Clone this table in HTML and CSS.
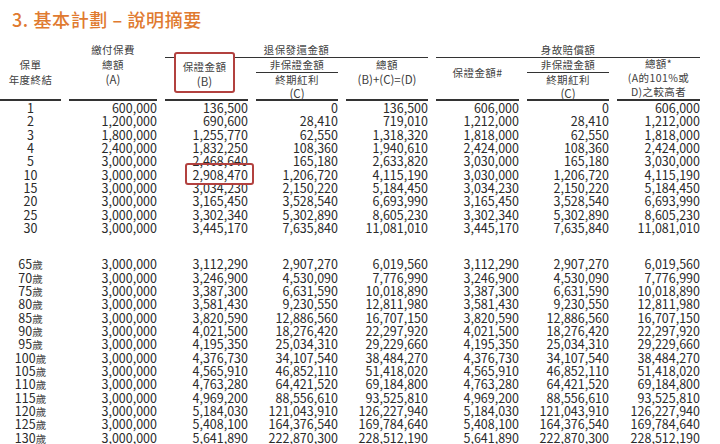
FILE: index.html
```html
<!DOCTYPE html>
<html lang="zh-Hant">
<head>
<meta charset="utf-8">
<title>基本計劃 – 說明摘要</title>
<link rel="stylesheet" href="styles.css">
</head>
<body>
<div class="page">
  <h1 class="title">3. 基本計劃 – 說明摘要</h1>

  <div class="head cols">
    <div class="grp grp-a">退保發還金額</div>
    <div class="grp grp-b">身故賠償額</div>

    <div class="hc c1 bottom"><span>保單</span><span>年度終結</span></div>
    <div class="hc c2 bottom"><span>繳付保費</span><span>總額</span><span class="lat">(A)</span></div>
    <div class="hc c3">
      <div class="mark"><span>保證金額</span><span class="lat">(B)</span></div>
    </div>
    <div class="hc c4 split">
      <span class="sub">非保證金額</span><span>終期紅利</span><span class="lat last">(C)</span>
    </div>
    <div class="hc c5 bottom"><span>總額</span><span class="lat">(B)+(C)=(D)</span></div>
    <div class="hc c6 mid"><span>保證金額#</span></div>
    <div class="hc c7 split">
      <span class="sub">非保證金額</span><span>終期紅利</span><span class="lat last">(C)</span>
    </div>
    <div class="hc c8 three"><span>總額*</span><span>(A的101%或</span><span>D)之較高者</span></div>
  </div>

  <div class="block block1">
    <div class="row cols"><span>1</span><span>600,000</span><span>136,500</span><span>0</span><span>136,500</span><span>606,000</span><span>0</span><span>606,000</span></div>
    <div class="row cols"><span>2</span><span>1,200,000</span><span>690,600</span><span>28,410</span><span>719,010</span><span>1,212,000</span><span>28,410</span><span>1,212,000</span></div>
    <div class="row cols"><span>3</span><span>1,800,000</span><span>1,255,770</span><span>62,550</span><span>1,318,320</span><span>1,818,000</span><span>62,550</span><span>1,818,000</span></div>
    <div class="row cols"><span>4</span><span>2,400,000</span><span>1,832,250</span><span>108,360</span><span>1,940,610</span><span>2,424,000</span><span>108,360</span><span>2,424,000</span></div>
    <div class="row cols"><span>5</span><span>3,000,000</span><span>2,468,640</span><span>165,180</span><span>2,633,820</span><span>3,030,000</span><span>165,180</span><span>3,030,000</span></div>
    <div class="row cols"><span>10</span><span>3,000,000</span><span><em class="hl">2,908,470</em></span><span>1,206,720</span><span>4,115,190</span><span>3,030,000</span><span>1,206,720</span><span>4,115,190</span></div>
    <div class="row cols"><span>15</span><span>3,000,000</span><span>3,034,230</span><span>2,150,220</span><span>5,184,450</span><span>3,034,230</span><span>2,150,220</span><span>5,184,450</span></div>
    <div class="row cols"><span>20</span><span>3,000,000</span><span>3,165,450</span><span>3,528,540</span><span>6,693,990</span><span>3,165,450</span><span>3,528,540</span><span>6,693,990</span></div>
    <div class="row cols"><span>25</span><span>3,000,000</span><span>3,302,340</span><span>5,302,890</span><span>8,605,230</span><span>3,302,340</span><span>5,302,890</span><span>8,605,230</span></div>
    <div class="row cols"><span>30</span><span>3,000,000</span><span>3,445,170</span><span>7,635,840</span><span>11,081,010</span><span>3,445,170</span><span>7,635,840</span><span>11,081,010</span></div>
  </div>

  <div class="block block2">
    <div class="row cols"><span>65<i>歲</i></span><span>3,000,000</span><span>3,112,290</span><span>2,907,270</span><span>6,019,560</span><span>3,112,290</span><span>2,907,270</span><span>6,019,560</span></div>
    <div class="row cols"><span>70<i>歲</i></span><span>3,000,000</span><span>3,246,900</span><span>4,530,090</span><span>7,776,990</span><span>3,246,900</span><span>4,530,090</span><span>7,776,990</span></div>
    <div class="row cols"><span>75<i>歲</i></span><span>3,000,000</span><span>3,387,300</span><span>6,631,590</span><span>10,018,890</span><span>3,387,300</span><span>6,631,590</span><span>10,018,890</span></div>
    <div class="row cols"><span>80<i>歲</i></span><span>3,000,000</span><span>3,581,430</span><span>9,230,550</span><span>12,811,980</span><span>3,581,430</span><span>9,230,550</span><span>12,811,980</span></div>
    <div class="row cols"><span>85<i>歲</i></span><span>3,000,000</span><span>3,820,590</span><span>12,886,560</span><span>16,707,150</span><span>3,820,590</span><span>12,886,560</span><span>16,707,150</span></div>
    <div class="row cols"><span>90<i>歲</i></span><span>3,000,000</span><span>4,021,500</span><span>18,276,420</span><span>22,297,920</span><span>4,021,500</span><span>18,276,420</span><span>22,297,920</span></div>
    <div class="row cols"><span>95<i>歲</i></span><span>3,000,000</span><span>4,195,350</span><span>25,034,310</span><span>29,229,660</span><span>4,195,350</span><span>25,034,310</span><span>29,229,660</span></div>
    <div class="row cols"><span>100<i>歲</i></span><span>3,000,000</span><span>4,376,730</span><span>34,107,540</span><span>38,484,270</span><span>4,376,730</span><span>34,107,540</span><span>38,484,270</span></div>
    <div class="row cols"><span>105<i>歲</i></span><span>3,000,000</span><span>4,565,910</span><span>46,852,110</span><span>51,418,020</span><span>4,565,910</span><span>46,852,110</span><span>51,418,020</span></div>
    <div class="row cols"><span>110<i>歲</i></span><span>3,000,000</span><span>4,763,280</span><span>64,421,520</span><span>69,184,800</span><span>4,763,280</span><span>64,421,520</span><span>69,184,800</span></div>
    <div class="row cols"><span>115<i>歲</i></span><span>3,000,000</span><span>4,969,200</span><span>88,556,610</span><span>93,525,810</span><span>4,969,200</span><span>88,556,610</span><span>93,525,810</span></div>
    <div class="row cols"><span>120<i>歲</i></span><span>3,000,000</span><span>5,184,030</span><span>121,043,910</span><span>126,227,940</span><span>5,184,030</span><span>121,043,910</span><span>126,227,940</span></div>
    <div class="row cols"><span>125<i>歲</i></span><span>3,000,000</span><span>5,408,100</span><span>164,376,540</span><span>169,784,640</span><span>5,408,100</span><span>164,376,540</span><span>169,784,640</span></div>
    <div class="row cols"><span>130<i>歲</i></span><span>3,000,000</span><span>5,641,890</span><span>222,870,300</span><span>228,512,190</span><span>5,641,890</span><span>222,870,300</span><span>228,512,190</span></div>
  </div>
</div>
</body>
</html>
```

FILE: styles.css
```css
html, body {
  margin: 0;
  padding: 0;
  background: #ffffff;
}

body {
  font-family: "Noto Sans CJK TC", "Noto Sans", sans-serif;
  color: #2e2e2e;
  overflow: hidden;
}

.page {
  width: 720px;
  height: 444px;
  overflow: hidden;
}

.title {
  margin: 0;
  height: 40px;
  box-sizing: border-box;
  padding: 7px 0 0 12px;
  font-size: 18px;
  line-height: 24px;
  font-weight: 500;
  letter-spacing: 0.6px;
  color: #e07a30;
}

.cols {
  display: grid;
  grid-template-columns: 61px 88px 83px 82px 82px 83px 82px 83px;
  column-gap: 8px;
}

/* ---------- header ---------- */
.head {
  grid-template-rows: 18px 43px;
  font-size: 10.5px;
  letter-spacing: 0.4px;
  color: #404040;
}

.grp {
  grid-row: 1;
  box-sizing: border-box;
  height: 18px;
  padding-top: 2.5px;
  line-height: 14.5px;
  text-align: center;
  border-bottom: 1.5px solid #333;
}
.grp-a { grid-column: 3 / 6; }
.grp-b { grid-column: 6 / 9; }

.hc {
  display: flex;
  flex-direction: column;
  text-align: center;
  border-bottom: 2px solid #333;
  line-height: 15px;
}
.hc .lat {
  font-size: 11.5px;
  letter-spacing: 0;
}

.c1 { grid-column: 1; grid-row: 1 / 3; }
.c2 { grid-column: 2; grid-row: 1 / 3; }
.c3 { grid-column: 3; grid-row: 1 / 3; }
.c4 { grid-column: 4; grid-row: 2; }
.c5 { grid-column: 5; grid-row: 2; }
.c6 { grid-column: 6; grid-row: 2; }
.c7 { grid-column: 7; grid-row: 2; }
.c8 { grid-column: 8; grid-row: 2; }

.bottom {
  justify-content: flex-end;
  padding-bottom: 12px;
}

.c3 {
  position: relative;
  z-index: 1;
  justify-content: flex-end;
  padding-bottom: 6px;
}
.mark {
  display: flex;
  flex-direction: column;
  width: 61px;
  box-sizing: border-box;
  margin-left: 9px;
  padding: 4.5px 0 2.5px;
  border: 2px solid #b2413f;
  border-radius: 3px;
  background: #ffffff;
}

.split {
  justify-content: flex-end;
}
.split span {
  line-height: 14px;
}
.split .sub {
  border-bottom: 1px solid #333;
}
.split .last {
  line-height: 12px;
}

.mid {
  justify-content: center;
  padding-bottom: 13px;
}

.three {
  justify-content: flex-end;
}
.three span {
  line-height: 14px;
}

/* ---------- body rows ---------- */
.block {
  font-size: 12.5px;
  color: #2a2a2a;
}
.block2 {
  margin-top: 23px;
}

.row {
  line-height: 13.33px;
  height: 13.33px;
  text-align: right;
  white-space: nowrap;
}
.row span:first-child {
  text-align: center;
}
.row i {
  font-style: normal;
  font-size: 10.5px;
  color: #444;
}

.hl {
  font-style: normal;
  position: relative;
  display: inline-block;
  line-height: 13.33px;
}
.hl::after {
  content: "";
  position: absolute;
  left: -7px;
  right: -6px;
  top: -5px;
  bottom: -4px;
  border: 2px solid #b2413f;
  border-radius: 3px;
}
```
